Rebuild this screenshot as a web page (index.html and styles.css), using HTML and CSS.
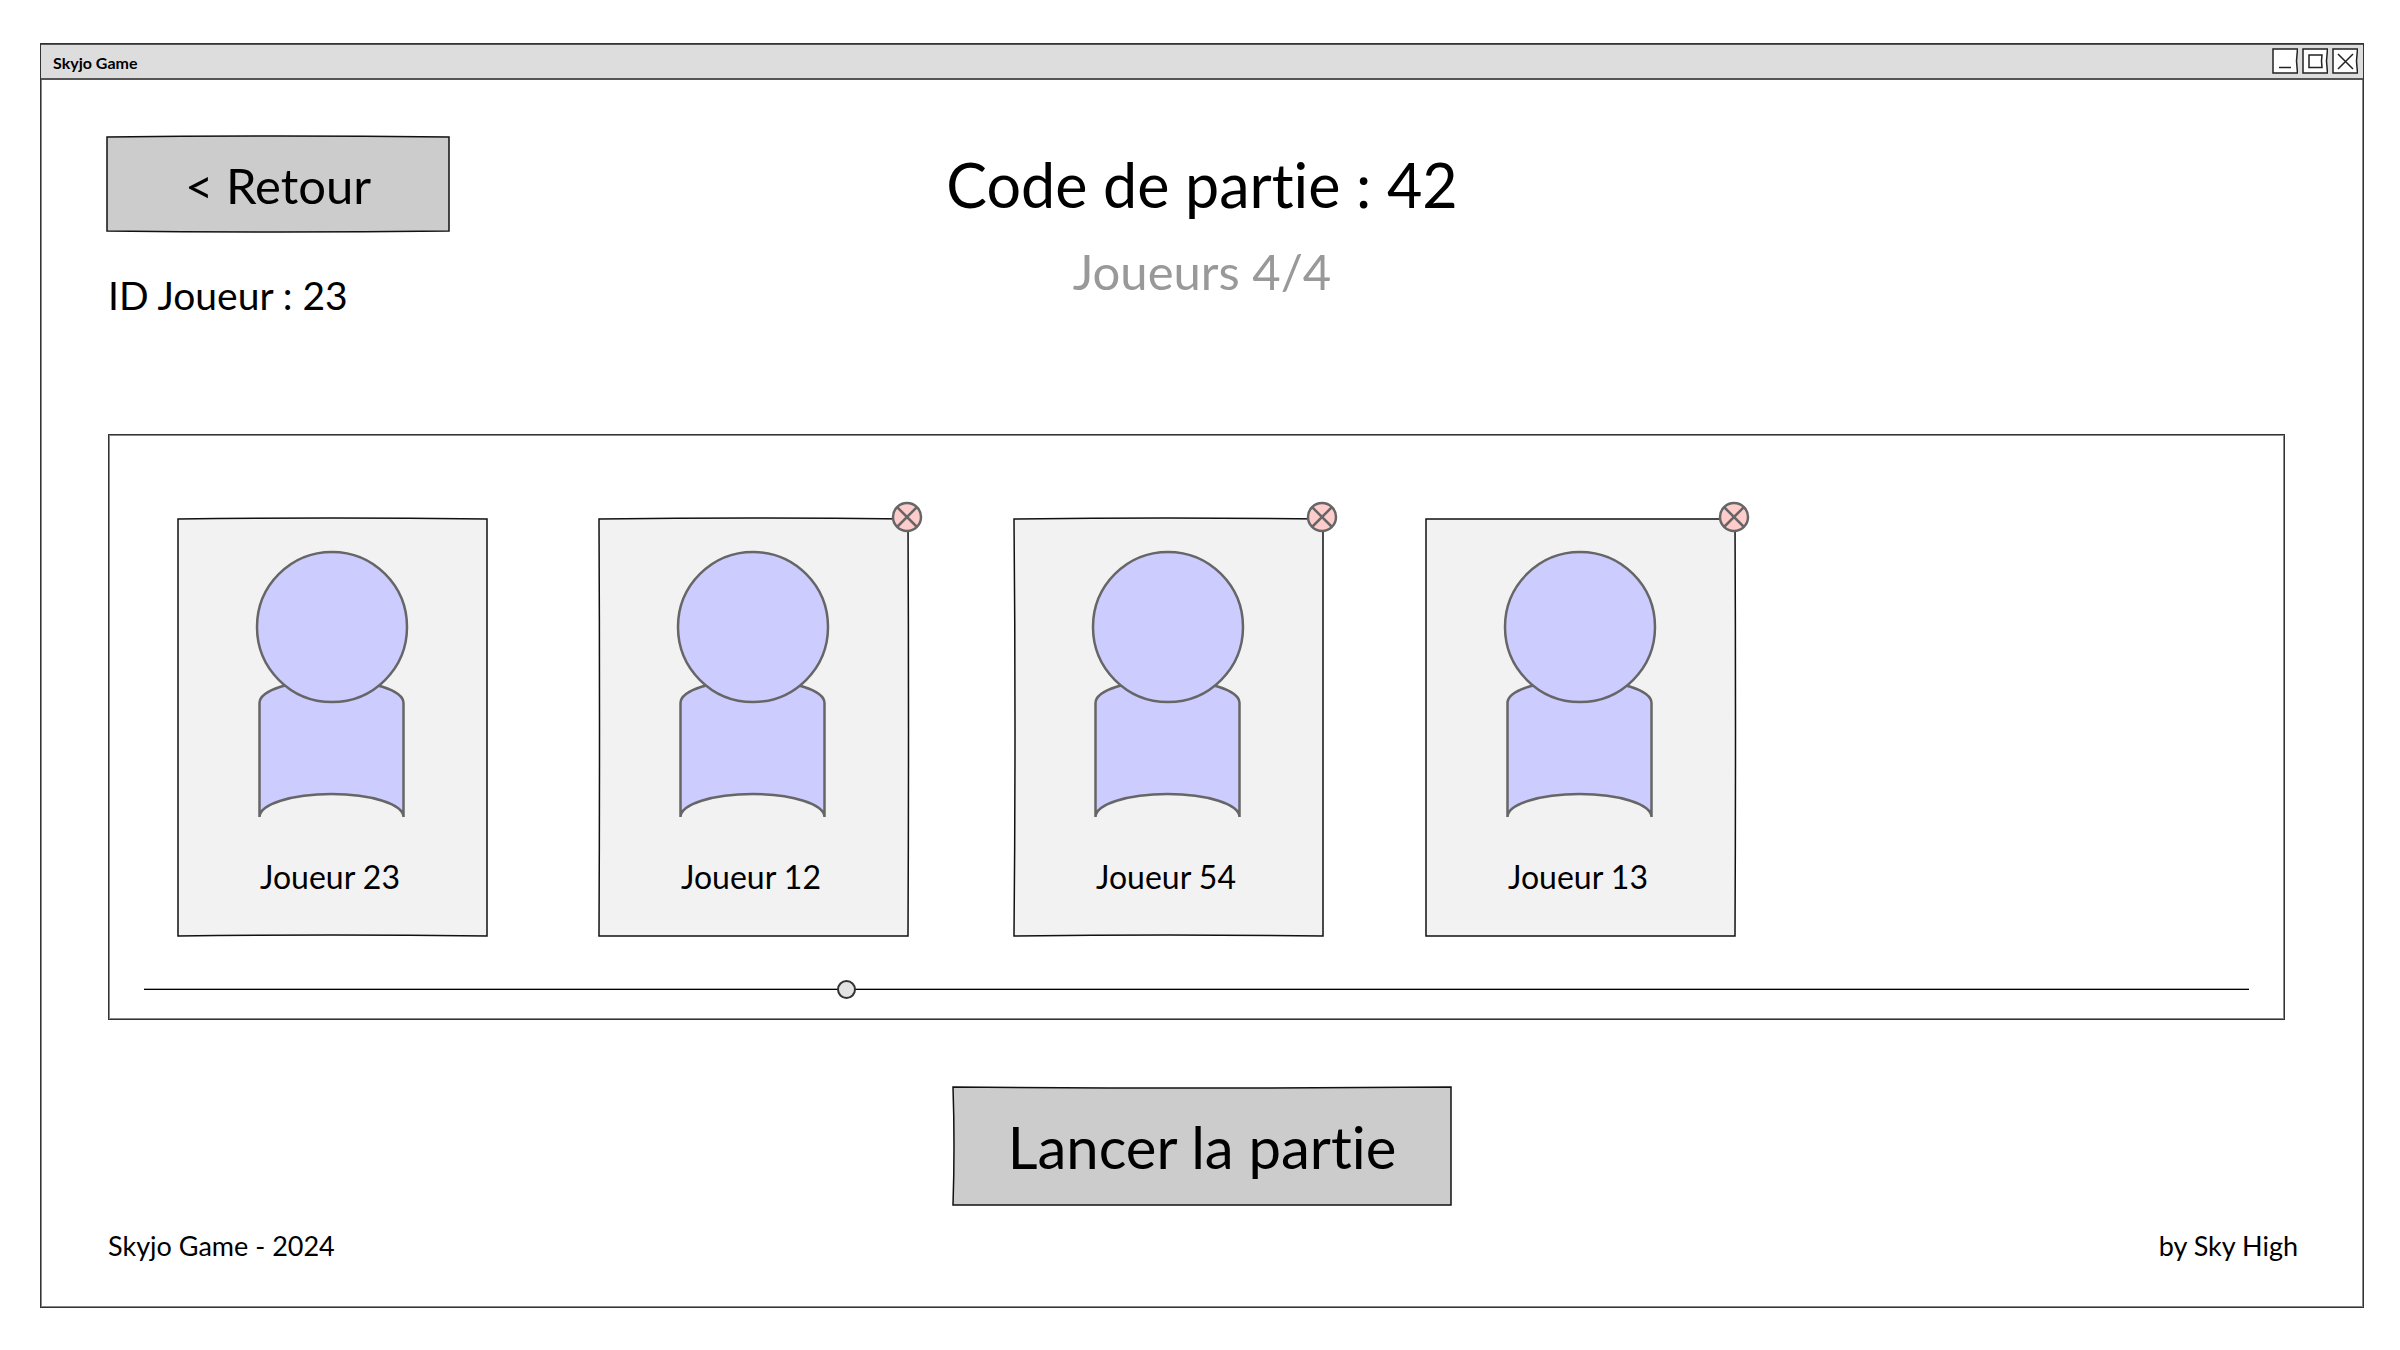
FILE: index.html
```html
<!DOCTYPE html>
<html lang="fr">
<head>
<meta charset="utf-8">
<meta name="viewport" content="width=device-width, initial-scale=1">
<title>Skyjo Game</title>
<link rel="stylesheet" href="styles.css">
</head>
<body>
<!-- Shared drawings -->
<svg class="defs" aria-hidden="true">
  <symbol id="avatar" viewBox="0 0 152 268" overflow="visible">
    <path d="M3.500 266V152A72 23 0 0 1 147.500 152V266A72 23 0 0 0 3.500 266Z"/>
    <circle cx="76" cy="76" r="75"/>
  </symbol>
  <symbol id="remove" viewBox="0 0 30 30" overflow="visible">
    <circle cx="15" cy="15" r="14"/>
    <path d="M5 5L25 25M25 5L5 25"/>
  </symbol>
</svg>

<div class="window">
  <header class="titlebar">
    <span class="titlebar-name">Skyjo Game</span>
    <div class="controls">
      <button class="control" type="button" aria-label="Réduire"><svg viewBox="0 0 26 26"><path d="M1 1H25.5L24.5 13L25.5 25H1Z"/><path d="M7 19.5H19"/></svg></button>
      <button class="control" type="button" aria-label="Agrandir"><svg viewBox="0 0 26 26"><path d="M1 1H25.5L24.5 13L25.5 25H1Z"/><path d="M7 7H20L19.5 13L20 19.5H7Z"/></svg></button>
      <button class="control" type="button" aria-label="Fermer"><svg viewBox="0 0 26 26"><path d="M1 1H25.5L24.5 13L25.5 25H1Z"/><path d="M6 6L21 21M21 6L6 21"/></svg></button>
    </div>
  </header>

  <main class="content">
    <section class="top">
      <div class="top-left">
        <button class="sketch back" type="button">
          <svg class="frame" viewBox="0 0 344 98" preserveAspectRatio="none"><path d="M1 1Q172 -1 343 1V95Q172 97 1 95Z"/></svg>
          <span class="label">&lt; Retour</span>
        </button>
        <p class="player-id">ID Joueur : 23</p>
      </div>
      <div class="top-center">
        <h1 class="title">Code de partie : 42</h1>
        <p class="count">Joueurs 4/4</p>
      </div>
    </section>

    <section class="panel" aria-label="Joueurs">
      <ul class="players">
        <li class="card">
          <svg class="frame" viewBox="0 0 311 419" preserveAspectRatio="none"><path d="M1 2Q155 0 310 2V418Q155 416 1 418Z"/></svg>
          <svg class="avatar"><use href="#avatar"/></svg>
          <span class="name">Joueur 23</span>
        </li>
        <li class="card">
          <svg class="frame" viewBox="0 0 311 419" preserveAspectRatio="none"><path d="M1 2Q155 0 310 2Q311 210 310 418H1Q2 210 1 2Z"/></svg>
          <svg class="avatar"><use href="#avatar"/></svg>
          <span class="name">Joueur 12</span>
          <button class="remove" type="button" aria-label="Retirer Joueur 12"><svg><use href="#remove"/></svg></button>
        </li>
        <li class="card">
          <svg class="frame" viewBox="0 0 311 419" preserveAspectRatio="none"><path d="M1 2Q155 0 310 2V418Q155 416 1 418Q3 210 1 2Z"/></svg>
          <svg class="avatar"><use href="#avatar"/></svg>
          <span class="name">Joueur 54</span>
          <button class="remove" type="button" aria-label="Retirer Joueur 54"><svg><use href="#remove"/></svg></button>
        </li>
        <li class="card">
          <svg class="frame" viewBox="0 0 311 419" preserveAspectRatio="none"><path d="M1 2H310Q311 210 310 418H1V2Z"/></svg>
          <svg class="avatar"><use href="#avatar"/></svg>
          <span class="name">Joueur 13</span>
          <button class="remove" type="button" aria-label="Retirer Joueur 13"><svg><use href="#remove"/></svg></button>
        </li>
      </ul>
      <input class="scroller" type="range" min="0" max="1000" value="332" aria-label="Défilement des joueurs">
    </section>

    <button class="sketch launch" type="button">
      <svg class="frame" viewBox="0 0 500 120" preserveAspectRatio="none"><path d="M1 1Q250 3 499 1V119H1Q3 60 1 1Z"/></svg>
      <span class="label">Lancer la partie</span>
    </button>

    <footer class="footer">
      <span>Skyjo Game - 2024</span>
      <span>by Sky High</span>
    </footer>
  </main>
</div>
</body>
</html>
```
FILE: styles.css
```css
* { box-sizing: border-box; }

body {
  margin: 0;
  min-height: 100vh;
  padding: 43px 36px 42px 40px;
  display: flex;
  background: #fff;
  color: #000;
  font-family: "Comic Sans MS", Lato, sans-serif;
  font-variant-ligatures: none;
}

button {
  font: inherit;
  font-variant-ligatures: none;
  color: inherit;
  padding: 0;
  border: 0;
  background: none;
  cursor: pointer;
}

h1, p, ul { margin: 0; padding: 0; font-weight: 400; }

.defs { position: absolute; width: 0; height: 0; }

.window {
  flex: 1;
  display: flex;
  flex-direction: column;
  border: 1px solid #333;
  box-shadow: inset 0 0 0 1px #888;
}

/* Title bar */
.titlebar {
  display: flex;
  align-items: center;
  justify-content: space-between;
  height: 36px;
  padding: 0 5px 0 12px;
  background: #dedddd;
  border-bottom: 2px solid #555;
  box-shadow: inset 0 1px 0 #555;
}
.titlebar-name { font-size: 16px; font-weight: 700; line-height: 32px; padding-top: 4px; }
.controls { display: flex; gap: 4px; }
.control { width: 26px; height: 26px; }
.control svg { display: block; width: 26px; height: 26px; fill: #fff; stroke: #222; stroke-width: 1.5; }

/* Page */
.content {
  flex: 1;
  display: flex;
  flex-direction: column;
  padding: 56px 65px 44px;
}
.top { display: grid; grid-template-columns: 1fr auto 1fr; }
.top-left { display: flex; flex-direction: column; align-items: flex-start; gap: 41px; }
.top-center { padding-top: 7px; text-align: center; }
.player-id { padding-left: 2px; font-size: 39px; line-height: 40px; }
.title { font-size: 61px; line-height: 84px; }
.count { padding-top: 4px; font-size: 49px; line-height: 80px; color: #999; }

/* Hand-drawn outlines */
.sketch { position: relative; }
.frame {
  position: absolute;
  inset: 0;
  width: 100%;
  height: 100%;
  overflow: visible;
  stroke: #111;
  stroke-width: 1.5;
}
.sketch .frame { fill: #ccc; }
.label { position: relative; }
.back { width: 344px; height: 98px; font-size: 49px; }
.launch {
  align-self: center;
  width: 500px;
  height: 120px;
  margin-top: 66px;
  font-size: 58px;
}

/* Players */
.panel {
  margin: 119px 13px 0 2px;
  padding: 82px 35px 20px;
  border: 1px solid #333;
  box-shadow: inset 0 0 0 1px #888;
}
.players {
  display: grid;
  grid-template-columns: 421px 415px 412px 311px;
  padding-left: 33px;
  list-style: none;
}
.card {
  position: relative;
  display: flex;
  flex-direction: column;
  width: 311px;
  height: 420px;
  padding: 34px 79px 0;
}
.card .frame { fill: #f2f2f2; }
.avatar {
  position: relative;
  width: 152px;
  height: 268px;
  overflow: visible;
  fill: #ccf;
  stroke: #666;
  stroke-width: 2.5;
}
.name {
  position: relative;
  padding: 40px 0 0 4px;
  font-size: 32px;
  line-height: 36px;
  white-space: nowrap;
}
.remove { position: absolute; top: -15px; right: -13px; width: 30px; height: 30px; }
.remove svg { display: block; width: 30px; height: 30px; overflow: visible; fill: #fcc; stroke: #666; stroke-width: 2.5; }

/* Horizontal scroller */
.scroller {
  appearance: none;
  display: block;
  width: 100%;
  height: 20px;
  margin: 42px 0 0;
  background: none;
}
.scroller::-webkit-slider-runnable-track {
  height: 20px;
  background: linear-gradient(#aaa 50%, #000 50%) center / 100% 2px no-repeat;
}
.scroller::-webkit-slider-thumb {
  appearance: none;
  width: 19px;
  height: 19px;
  margin-top: 1px;
  border: 2px solid #333;
  border-radius: 50%;
  background: #e3e3e3;
}

.footer {
  display: flex;
  justify-content: space-between;
  margin-top: 24px;
  padding-left: 2px;
  font-size: 27px;
  line-height: 32px;
}
```
